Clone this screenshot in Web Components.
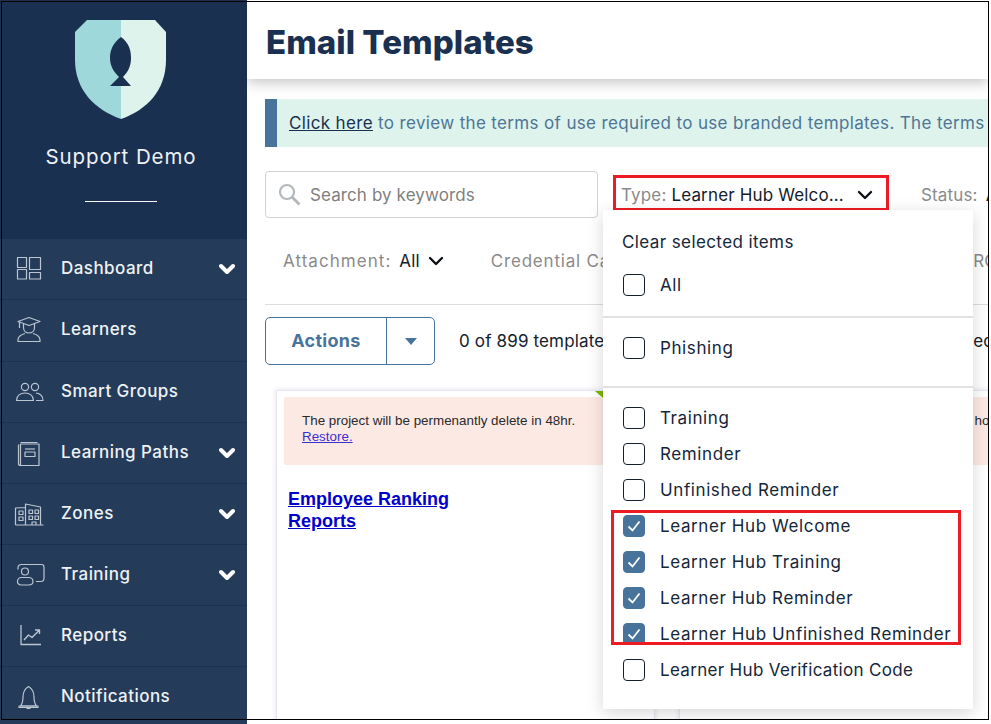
<!DOCTYPE html>
<html lang="en">
<head>
<meta charset="utf-8">
<title>Email Templates</title>
<style>
  html, body { margin: 0; padding: 0; background: #fff; }
  body { width: 991px; height: 724px; overflow: hidden; font-family: Inter, "Liberation Sans", sans-serif; }
</style>
</head>
<body>
<app-shell>
  <side-nav slot="nav">
    <nav-item icon="dashboard" expandable>Dashboard</nav-item>
    <nav-item icon="learners" style="height:62px;padding-bottom:1px">Learners</nav-item>
    <nav-item icon="groups">Smart Groups</nav-item>
    <nav-item icon="paths" expandable>Learning Paths</nav-item>
    <nav-item icon="zones" expandable>Zones</nav-item>
    <nav-item icon="training" expandable>Training</nav-item>
    <nav-item icon="reports">Reports</nav-item>
    <nav-item icon="bell">Notifications</nav-item>
  </side-nav>
  <page-header>Email Templates</page-header>
  <terms-notice><a href="#">Click here</a> to review the terms of use required to use branded templates. The terms of use</terms-notice>
  <filter-bar>
    <search-box slot="search" placeholder="Search by keywords"></search-box>
    <filter-select slot="type" label="Type:" value="Learner Hub Welco..." marked></filter-select>
    <filter-select slot="status" label="Status:" value="All"></filter-select>
    <filter-select slot="attachment" label="Attachment:" value="All" style="--label-spacing:1.05px"></filter-select>
    <filter-select slot="credential" label="Credential Category:" value="All" style="--label-spacing:.8px"></filter-select>
    <filter-select slot="role" label="ROI:" value="All"></filter-select>
    <type-menu slot="menu"></type-menu>
  </filter-bar>
  <actions-bar count="0 of 899 templates selected"></actions-bar>
  <card-row>
    <template-card heading="Employee Ranking Reports" notice="The project will be permenantly delete in 48hr."></template-card>
    <template-card heading="Employee Ranking Reports" notice="The project will be permenantly delete in 120 hours."></template-card>
  </card-row>
</app-shell>

<script>
const ICONS = {
  dashboard: '<rect x="3.5" y="3.5" width="9" height="10"/><rect x="15.5" y="3.5" width="11" height="12"/><rect x="3.5" y="15.5" width="9" height="9.5"/><rect x="15.5" y="18.5" width="11" height="6.5"/>',
  learners: '<path d="M4 6.5 15 2.5l11 4-11 4z"/><path d="M5.5 7v6M9.5 9v3.5c0 3.5 2.500 5.500 5.500 5.500s5.500-2 5.500-5.500V9"/><path d="M11 18.500c-3.500 1-7 3-7 6.500v1.500h22V25c0-3.500-3.500-5.500-7-6.500"/>',
  groups: '<circle cx="11" cy="10" r="3.600"/><circle cx="21" cy="10" r="3.600"/><path d="M2.500 23.500c0-5 4-7.500 8.500-7.500s8.500 2.500 8.500 7.500z"/><path d="M22 16c4 .5 7 3 7 7.500h-7"/>',
  paths: '<path d="M6.500 4.500h17M4.500 6.500v19c0 1 .8 2 2 2"/><rect x="6.500" y="6" width="18.500" height="21.500"/><rect x="11" y="14" width="10" height="4.500"/><path d="M11 11h10"/>',
  zones: '<path d="M1.500 26V9l10-.5M11.500 26V5l15 3v18M1.500 26h28"/><path d="M5 12h4v3.500H5zM5 18h4v3.500H5zM15 11h3.500v3.500H15zM21 11h3.500v3.500H21zM15 17h3.500v3.500H15zM21 17h3.500v3.500H21zM18 26v-3h4v3"/>',
  training: '<path d="M4 9.500V8c0-2 1.500-3.500 3.500-3.500h20C29 4.500 30 5.500 30 7v11c0 2-1 3.500-3 3.500h-5"/><circle cx="11" cy="11.500" r="3.500"/><path d="M7.500 17.500h7c2.500 0 4.500 1.500 4.500 4s-2 3.500-4.500 3.500h-7C5 25 3.500 23.500 3.500 21.500s1.500-4 4-4z"/>',
  reports: '<path d="M7 4v19.500h20" stroke-width="1.300"/><path d="M10 19l4.500-5 3.500 2.500 7-7M21 9h4.500v4" stroke-width="1.400"/>',
  bell: '<path d="M6.500 24c2-2.500 2.500-5 2.500-9 0-5 2-8.500 5.500-10.500C18 6.500 20 10 20 15c0 4 .5 6.500 2.500 9z"/><path d="M5 24h19v1.500H5zM12.500 26.500h4"/>'
};

const chevron = (stroke, sw) => `<svg width="16" height="12" viewBox="0 0 16 12" fill="none" stroke="${stroke}" stroke-width="${sw}" stroke-linecap="round" stroke-linejoin="round"><path d="M2 3l6 6 6-6"/></svg>`;

class AppShell extends HTMLElement {
  constructor() {
    super();
    this.attachShadow({mode: 'open'}).innerHTML = `
      <style>
        :host { display: block; position: relative; width: 991px; height: 724px; overflow: hidden; background: #fff; }
        .layout { display: flex; height: 100%; }
        main { width: 741px; height: 719px; overflow: hidden; display: flex; flex-direction: column; position: relative; }
        .frame { position: absolute; left: 1px; top: 1px; width: 988px; height: 719px; border: 1px solid #000; box-sizing: border-box; pointer-events: none; z-index: 50; }
      </style>
      <div class="layout">
        <slot name="nav"></slot>
        <main><slot></slot></main>
      </div>
      <div class="frame"></div>`;
  }
}

class SideNav extends HTMLElement {
  constructor() {
    super();
    this.attachShadow({mode: 'open'}).innerHTML = `
      <style>
        :host { display: flex; flex-direction: column; width: 247px; height: 724px; flex: none; background: #243b5a; overflow: hidden; }
        .brand { height: 239px; flex: none; box-sizing: border-box; background: #1a3050; display: flex; flex-direction: column; align-items: center; padding: 20px 5px 0 0; }
        .brand svg { display: block; }
        .name { margin: 25px 0 0; font: 400 20.500px/24px Inter, sans-serif; letter-spacing: .9px; color: #eef2f5; }
        .rule { width: 72px; height: 1px; background: #fff; margin: 32px 0 0; }
      </style>
      <div class="brand">
        <svg width="92" height="100" viewBox="0 0 92 100">
          <path d="M46 0H12L0 12V40C0 70 20 90 46 99Z" fill="#9ed8da"/>
          <path d="M46 0H80L91 12V40C91 70 72 90 46 99Z" fill="#def3ec"/>
          <path d="M46 17C38 23 35 30 35 38C35 46 39 52 44 57L35 66H56L48 57C53 52 56 46 56 38C56 30 54 23 46 17Z" fill="#1a3050"/>
        </svg>
        <div class="name">Support Demo</div>
        <div class="rule"></div>
      </div>
      <slot></slot>`;
  }
}

class NavItem extends HTMLElement {
  connectedCallback() {
    if (this.shadowRoot) return;
    const icon = ICONS[this.getAttribute('icon')] || '';
    const more = this.hasAttribute('expandable') ? chevron('#fff', 4) : '';
    this.attachShadow({mode: 'open'}).innerHTML = `
      <style>
        :host { display: flex; align-items: center; height: 61px; flex: none; box-sizing: border-box; padding: 0 12px 0 14px; border-bottom: 1px solid #1c3350; color: #eef2f5; }
        svg.icon { width: 32px; height: 30px; flex: none; margin-right: 15px; }
        .label { font: 500 17px/22px Inter, sans-serif; letter-spacing: .45px; flex: 1; padding-bottom: 2px; }
      </style>
      <svg class="icon" viewBox="0 0 32 30" fill="none" stroke="#bcc6d1" stroke-width="1.200" stroke-linejoin="round">${icon}</svg>
      <span class="label"><slot></slot></span>
      ${more}`;
  }
}

class PageHeader extends HTMLElement {
  constructor() {
    super();
    this.attachShadow({mode: 'open'}).innerHTML = `
      <style>
        :host { display: flex; align-items: center; flex: none; height: 79px; box-sizing: border-box; padding: 4px 0 0 19px; background: #fff; box-shadow: 0 4px 12px rgba(0,0,0,.22); position: relative; z-index: 2; }
        h1 { margin: 0; font: 800 33px/40px Inter, sans-serif; letter-spacing: .05px; color: #1a3050; white-space: nowrap; }
      </style>
      <h1><slot></slot></h1>`;
  }
}

class TermsNotice extends HTMLElement {
  constructor() {
    super();
    this.attachShadow({mode: 'open'}).innerHTML = `
      <style>
        :host { display: block; flex: none; height: 48px; box-sizing: border-box; margin: 20px 0 0 18px; border-left: 12px solid #48749c; background: #def3ec; padding-left: 12px; font: 400 17px/48px Inter, sans-serif; letter-spacing: .35px; color: #4d7596; white-space: nowrap; overflow: hidden; }
        ::slotted(a) { color: #1a3050; text-decoration: underline; }
      </style>
      <slot></slot>`;
  }
}

class SearchBox extends HTMLElement {
  connectedCallback() {
    if (this.shadowRoot) return;
    this.attachShadow({mode: 'open'}).innerHTML = `
      <style>
        :host { display: flex; align-items: center; width: 333px; height: 47px; box-sizing: border-box; border: 1px solid #d2d2d2; border-radius: 4px; padding-left: 12px; flex: none; background: #fff; }
        svg { flex: none; margin-right: 9px; }
        span { font: 400 17px/22px Inter, sans-serif; letter-spacing: .1px; color: #7f7f7f; }
      </style>
      <svg width="23" height="23" viewBox="0 0 23 23" fill="none" stroke="#b3b8bc" stroke-width="2.200"><circle cx="9" cy="9" r="7"/><path d="M14 14l7.500 7.500" stroke-width="2.800"/></svg>
      <span>${this.getAttribute('placeholder')}</span>`;
  }
}

class FilterSelect extends HTMLElement {
  connectedCallback() {
    if (this.shadowRoot) return;
    this.attachShadow({mode: 'open'}).innerHTML = `
      <style>
        :host { display: flex; align-items: center; flex: none; white-space: nowrap; font: 400 17px/22px Inter, sans-serif; letter-spacing: .15px; }
        :host([marked]) { width: 276px; height: 36px; box-sizing: border-box; border: 3px solid #ed1c24; padding: 3px 0 0 5px; margin-bottom: 3px; }
        .label { color: #8a8a8a; margin-right: 8px; letter-spacing: var(--label-spacing, .15px); }
        .value { color: #14202c; margin-right: 8px; }
        :host([marked]) .label { margin-right: 5px; }
        :host([marked]) .value { margin-right: 13px; }
      </style>
      <span class="label">${this.getAttribute('label')}</span>
      <span class="value">${this.getAttribute('value')}</span>
      ${chevron('#0c1116', 2.400)}`;
  }
}

class FilterBar extends HTMLElement {
  constructor() {
    super();
    this.attachShadow({mode: 'open'}).innerHTML = `
      <style>
        :host { display: block; flex: none; margin: 24px 0 0 18px; position: relative; }
        .row { display: flex; align-items: center; }
        .top { height: 47px; }
        .top ::slotted([slot="type"]) { margin-left: 15px; }
        .top ::slotted([slot="status"]) { margin-left: 32px; }
        .bottom { height: 87px; box-sizing: border-box; padding: 32px 0 0 18px; border-bottom: 1px solid #ddd; align-items: flex-start; }
        .bottom ::slotted([slot="credential"]) { margin-left: 47px; }
        .bottom ::slotted([slot="role"]) { margin-left: 248px; }
      </style>
      <div class="row top">
        <slot name="search"></slot><slot name="type"></slot><slot name="status"></slot>
      </div>
      <div class="row bottom">
        <slot name="attachment"></slot><slot name="credential"></slot><slot name="role"></slot>
      </div>
      <slot name="menu"></slot>`;
  }
}

class CheckOption extends HTMLElement {
  connectedCallback() {
    if (this.shadowRoot) return;
    const checked = this.hasAttribute('checked');
    this.attachShadow({mode: 'open'}).innerHTML = `
      <style>
        :host { display: flex; align-items: center; height: 36px; flex: none; font: 400 17px/22px Inter, sans-serif; letter-spacing: .6px; color: #14263a; white-space: nowrap; }
        .box { width: 22px; height: 22px; box-sizing: border-box; border: 1px solid #14202c; border-radius: 4px; margin-right: 15px; flex: none; display: flex; align-items: center; justify-content: center; }
        :host([checked]) .box { background: #48749c; border-color: #48749c; }
      </style>
      <span class="box">${checked ? '<svg width="14" height="12" viewBox="0 0 14 12" fill="none" stroke="#fff" stroke-width="1.800"><path d="M1.500 6.500l4 4 7-9"/></svg>' : ''}</span>
      <span><slot></slot></span>`;
  }
}

class TypeMenu extends HTMLElement {
  constructor() {
    super();
    this.attachShadow({mode: 'open'}).innerHTML = `
      <style>
        :host { display: block; position: absolute; left: 338px; top: 39px; width: 370px; height: 499px; box-sizing: border-box; background: #fff; box-shadow: 0 4px 16px rgba(0,0,0,.16); z-index: 5; }
        .clear { height: 64px; box-sizing: border-box; padding: 21px 0 0 19px; font: 400 17px/22px Inter, sans-serif; letter-spacing: .4px; color: #14263a; }
        section { padding-left: 20px; display: flex; flex-direction: column; }
        .first { height: 42px; border-bottom: 2px solid #e2e2e2; box-sizing: content-box; }
        .first check-option { height: 22px; }
        .second { height: 70px; border-bottom: 2px solid #e2e2e2; box-sizing: border-box; padding-top: 12px; }
        .third { padding-top: 12px; }
        .marked { position: relative; display: flex; flex-direction: column; }
        .marked::after { content: ""; position: absolute; left: -12px; right: 12px; top: 2px; bottom: 7px; border: 3px solid #ed1c24; pointer-events: none; }
      </style>
      <div class="clear">Clear selected items</div>
      <section class="first"><check-option>All</check-option></section>
      <section class="second"><check-option>Phishing</check-option></section>
      <section class="third">
        <check-option>Training</check-option>
        <check-option>Reminder</check-option>
        <check-option>Unfinished Reminder</check-option>
        <div class="marked">
          <check-option checked>Learner Hub Welcome</check-option>
          <check-option checked>Learner Hub Training</check-option>
          <check-option checked>Learner Hub Reminder</check-option>
          <check-option checked>Learner Hub Unfinished Reminder</check-option>
        </div>
        <check-option style="letter-spacing:.32px">Learner Hub Verification Code</check-option>
      </section>`;
  }
}

class ActionsBar extends HTMLElement {
  connectedCallback() {
    if (this.shadowRoot) return;
    this.attachShadow({mode: 'open'}).innerHTML = `
      <style>
        :host { display: flex; align-items: center; flex: none; margin: 12px 0 0 18px; height: 48px; white-space: nowrap; font: 400 17px/22px Inter, sans-serif; letter-spacing: .15px; color: #14202c; }
        .button { display: flex; width: 170px; height: 48px; box-sizing: border-box; border: 1px solid #48749c; border-radius: 5px; flex: none; margin-right: 24px; }
        .main { width: 121px; box-sizing: border-box; border-right: 1px solid #48749c; display: flex; align-items: center; justify-content: center; font-weight: 700; font-size: 18px; letter-spacing: .3px; color: #48749c; }
        .caret { flex: 1; display: flex; align-items: center; justify-content: center; }
        .select { margin-left: 260px; }
      </style>
      <div class="button"><span class="main">Actions</span><span class="caret"><svg width="12" height="7" viewBox="0 0 12 7"><path d="M0 0h12L6 7z" fill="#48749c"/></svg></span></div>
      <span>${this.getAttribute('count')}</span>
      <span class="select">Selected</span>`;
  }
}

class CardRow extends HTMLElement {
  constructor() {
    super();
    this.attachShadow({mode: 'open'}).innerHTML = `
      <style>
        :host { display: flex; gap: 24px; flex: none; margin: 25px 0 0 29px; }
      </style>
      <slot></slot>`;
  }
}

class TemplateCard extends HTMLElement {
  connectedCallback() {
    if (this.shadowRoot) return;
    this.attachShadow({mode: 'open'}).innerHTML = `
      <style>
        :host { display: block; position: relative; width: 379px; height: 340px; flex: none; box-sizing: border-box; padding: 6px 6px 0 7px; background: #fff; border: 1px solid #e6e6f0; box-shadow: 0 0 5px rgba(90,90,170,.18); font-family: "Liberation Sans", sans-serif; }
        .notice { height: 68px; box-sizing: border-box; padding: 16px 0 0 18px; background: #fde9e4; border-radius: 2px; font-size: 13.400px; line-height: 16px; color: #2a2a2a; white-space: nowrap; }
        .notice a { color: #3a2fd0; display: block; }
        h2 { margin: 23px 0 0 4px; max-width: 200px; font-size: 18px; line-height: 22px; font-weight: 700; }
        h2 a { color: #0000cc; }
        .corner { position: absolute; left: 318px; top: 0; width: 0; height: 0; border-top: 7px solid #7ab800; border-left: 8px solid transparent; }
      </style>
      <div class="corner"></div>
      <div class="notice">${this.getAttribute('notice')}<a href="#">Restore.</a></div>
      <h2><a href="#">${this.getAttribute('heading')}</a></h2>`;
  }
}

customElements.define('app-shell', AppShell);
customElements.define('side-nav', SideNav);
customElements.define('nav-item', NavItem);
customElements.define('page-header', PageHeader);
customElements.define('terms-notice', TermsNotice);
customElements.define('search-box', SearchBox);
customElements.define('filter-select', FilterSelect);
customElements.define('filter-bar', FilterBar);
customElements.define('check-option', CheckOption);
customElements.define('type-menu', TypeMenu);
customElements.define('actions-bar', ActionsBar);
customElements.define('card-row', CardRow);
customElements.define('template-card', TemplateCard);
</script>
</body>
</html>
